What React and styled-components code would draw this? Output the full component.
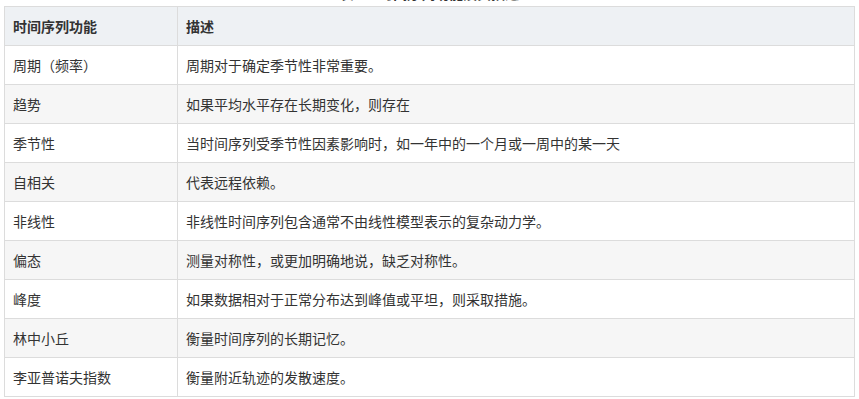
import React from "react";
import styled, { createGlobalStyle } from "styled-components";

const GlobalStyle = createGlobalStyle`
  body {
    margin: 0;
    background: #fff;
    font-family: "Noto Sans CJK SC", "Noto Sans", sans-serif;
    color: #333;
  }
`;

const Page = styled.div`
  padding: 0 4px;
  overflow: hidden;
`;

/* caption sits above the visible area; only its lower edge shows */
const Caption = styled.div`
  height: 6px;
  overflow: hidden;
  text-align: center;
  font-size: 14px;
  font-weight: 700;
  line-height: 14px;

  span {
    display: block;
    margin-top: -14px;
  }
`;

const Table = styled.table`
  width: 851px;
  border-collapse: collapse;
  font-size: 14px;
  table-layout: fixed;
`;

const HeadCell = styled.th`
  height: 38px;
  padding: 0 8px;
  text-align: left;
  font-weight: 700;
  background: #eef1f4;
  border: 1px solid #dcdcdc;
  width: ${(p) => p.w || "auto"};
`;

const Row = styled.tr`
  background: ${(p) => (p.striped ? "#f6f6f6" : "#fff")};
`;

const Cell = styled.td`
  height: 38px;
  padding: 0 8px;
  border: 1px solid #dcdcdc;
  white-space: nowrap;
`;

const rows = [
  ["周期（频率）", "周期对于确定季节性非常重要。"],
  ["趋势", "如果平均水平存在长期变化，则存在"],
  ["季节性", "当时间序列受季节性因素影响时，如一年中的一个月或一周中的某一天"],
  ["自相关", "代表远程依赖。"],
  ["非线性", "非线性时间序列包含通常不由线性模型表示的复杂动力学。"],
  ["偏态", "测量对称性，或更加明确地说，缺乏对称性。"],
  ["峰度", "如果数据相对于正常分布达到峰值或平坦，则采取措施。"],
  ["林中小丘", "衡量时间序列的长期记忆。"],
  ["李亚普诺夫指数", "衡量附近轨迹的发散速度。"],
];

const App = () => {
  return (
    <Page>
      <GlobalStyle />
      <Caption>
        <span>表 1：时间序列功能及其描述</span>
      </Caption>
      <Table>
        <thead>
          <tr>
            <HeadCell w="156px">时间序列功能</HeadCell>
            <HeadCell>描述</HeadCell>
          </tr>
        </thead>
        <tbody>
          {rows.map((r, i) => (
            <Row key={r[0]} striped={i % 2 === 1}>
              <Cell>{r[0]}</Cell>
              <Cell>{r[1]}</Cell>
            </Row>
          ))}
        </tbody>
      </Table>
    </Page>
  );
};

export default App;
